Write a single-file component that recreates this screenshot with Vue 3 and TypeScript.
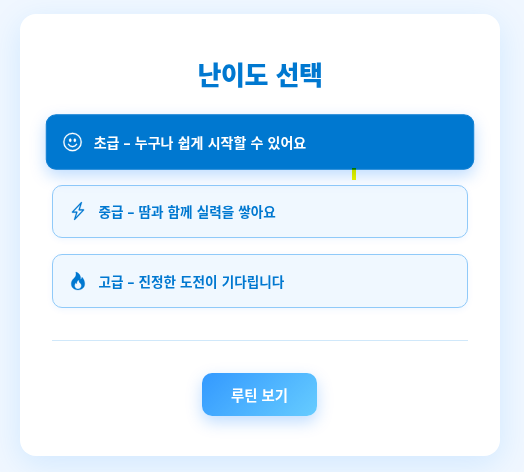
<script setup lang="ts">
import { ref } from 'vue'

interface Level {
  id: string
  label: string
  paths: string[]
}

const levels: Level[] = [
  {
    id: 'easy',
    label: '초급 – 누구나 쉽게 시작할 수 있어요',
    paths: [
      'M8 15A7 7 0 1 1 8 1a7 7 0 0 1 0 14m0 1A8 8 0 1 0 8 0a8 8 0 0 0 0 16',
      'M4.285 9.567a.5.5 0 0 1 .683.183A3.5 3.5 0 0 0 8 11.5a3.5 3.5 0 0 0 3.032-1.75.5.5 0 1 1 .866.5A4.5 4.5 0 0 1 8 12.5a4.5 4.5 0 0 1-3.898-2.25.5.5 0 0 1 .183-.683M7 6.5C7 7.328 6.552 8 6 8s-1-.672-1-1.5S5.448 5 6 5s1 .672 1 1.5m4 0c0 .828-.448 1.5-1 1.5s-1-.672-1-1.5S9.448 5 10 5s1 .672 1 1.5',
    ],
  },
  {
    id: 'medium',
    label: '중급 – 땀과 함께 실력을 쌓아요',
    paths: [
      'M11.251.068a.5.5 0 0 1 .227.58L9.677 6.5H13a.5.5 0 0 1 .364.843l-8 8.5a.5.5 0 0 1-.842-.49L6.323 9.5H3a.5.5 0 0 1-.364-.843l8-8.5a.5.5 0 0 1 .615-.09zM4.157 8.5H7a.5.5 0 0 1 .478.647L6.11 13.59l5.732-6.09H9a.5.5 0 0 1-.478-.647L9.89 2.41z',
    ],
  },
  {
    id: 'hard',
    label: '고급 – 진정한 도전이 기다립니다',
    paths: [
      'M8 16c3.314 0 6-2 6-5.5 0-1.5-.5-4-2.5-6 .25 1.5-1.25 2-1.25 2C11 4 9 .5 6 0c.357 2 .5 4-2 6-1.25 1-2 2.729-2 4.5C2 14 4.686 16 8 16m0-1c-1.657 0-3-1-3-2.75 0-.75.25-2 1.25-3C6.125 10 7 10.5 7 10.5c-.375-1.25.5-3.25 2-3.5-.179 1-.25 2 1 3 .625.5 1 1.364 1 2.25C11 14 9.657 15 8 15',
    ],
  },
]

const selected = ref('easy')
</script>

<template>
  <main class="page">
    <section class="card">
      <h1 class="title">난이도 선택</h1>
      <div class="levels">
        <button
          v-for="level in levels"
          :key="level.id"
          type="button"
          class="level"
          :class="{ active: selected === level.id }"
          @click="selected = level.id"
        >
          <svg class="icon" viewBox="0 0 16 16" aria-hidden="true">
            <path v-for="d in level.paths" :key="d" :d="d" />
          </svg>
          <span>{{ level.label }}</span>
        </button>
      </div>
      <hr class="divider" />
      <button type="button" class="submit">루틴 보기</button>
    </section>
    <i class="marker"></i>
  </main>
</template>

<style>
body {
  margin: 0;
  background: #f0f7ff;
}
</style>

<style scoped>
.page {
  position: relative;
  box-sizing: border-box;
  height: 472px;
  padding: 14px 24px 16px 20px;
  overflow: hidden;
  background: #f0f7ff;
  font-family: 'Noto Sans', 'Noto Sans CJK KR', sans-serif;
}
.card {
  box-sizing: border-box;
  display: flex;
  flex-direction: column;
  align-items: center;
  width: 480px;
  height: 442px;
  padding: 41px 32px 39px;
  border-radius: 16px;
  background: #fff;
  box-shadow: 0 8px 32px rgba(0, 140, 255, 0.13);
}
.title {
  margin: 0 0 20px;
  color: #0078d0;
  font-size: 26px;
  font-weight: 900;
  line-height: 40px;
  letter-spacing: -0.4px;
  word-spacing: 1px;
}
.levels {
  display: flex;
  flex-direction: column;
  gap: 16px;
  width: 100%;
}
.level {
  box-sizing: border-box;
  display: flex;
  align-items: center;
  gap: 12px;
  width: 100%;
  height: 53.6px;
  padding: 0 15.5px;
  border: 1px solid #90caf9;
  border-radius: 10px;
  background: #f0f8ff;
  color: #0078d0;
  font: inherit;
  font-size: 13.6px;
  font-weight: 700;
  word-spacing: 0.55px;
  box-shadow: 0 2px 6px rgba(0, 120, 255, 0.06);
}
.active {
  border-color: #1180d3;
  background: #0078d0;
  color: #fff;
  box-shadow: 0 6px 16px rgba(0, 120, 255, 0.25);
  transform: scale(1.03);
}
.icon {
  flex: none;
  width: 18px;
  height: 18px;
  overflow: visible;
  fill: currentColor;
  stroke: currentColor;
  stroke-width: 0.2;
}
.divider {
  width: 100%;
  height: 1px;
  margin: 32px 0;
  border: 0;
  background: #d0e8fa;
}
.submit {
  width: 115px;
  height: 43px;
  margin-right: 1px;
  padding: 0;
  border: 0;
  border-radius: 10px;
  background: linear-gradient(135deg, #3399ff, #66ccff);
  color: #fff;
  font: inherit;
  font-size: 14.4px;
  font-weight: 700;
  word-spacing: 0.4px;
  box-shadow: 0 6px 16px rgba(0, 120, 255, 0.25);
}
.marker {
  position: absolute;
  top: 168px;
  left: 352px;
  width: 4px;
  height: 12px;
  background: #f5f800;
  mix-blend-mode: multiply;
}
</style>
